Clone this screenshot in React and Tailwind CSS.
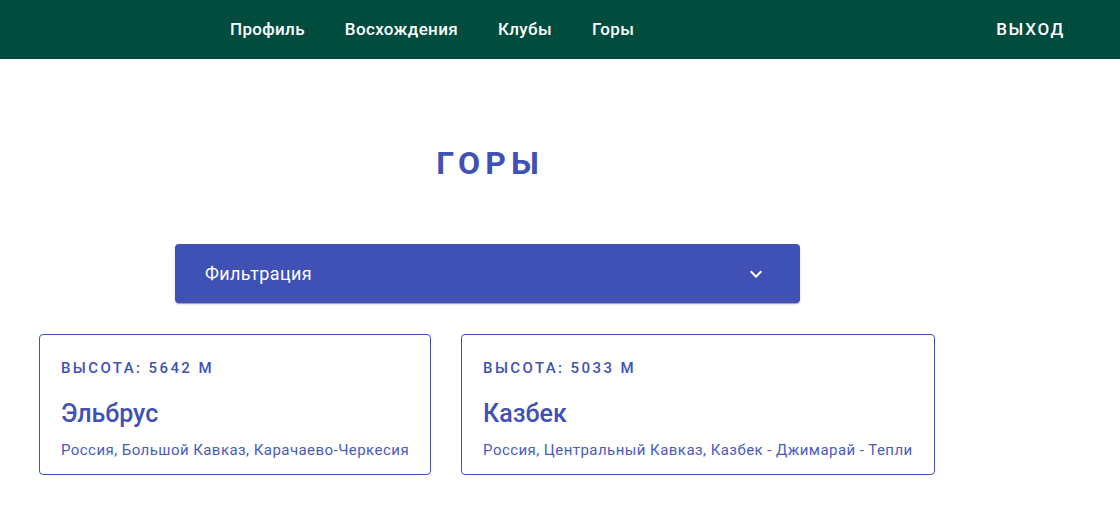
import React from 'react';

const mountains = [
  { id: 1, height: 5642, name: 'Эльбрус', region: 'Россия, Большой Кавказ, Карачаево-Черкесия' },
  { id: 2, height: 5033, name: 'Казбек', region: 'Россия, Центральный Кавказ, Казбек - Джимарай - Тепли' },
];

const navItems = ['Профиль', 'Восхождения', 'Клубы', 'Горы'];

function ExpandIcon() {
  return (
    <svg viewBox="0 0 24 24" className="h-6 w-6 fill-white">
      <path d="M16.59 8.59 12 13.17 7.41 8.59 6 10l6 6 6-6z" />
    </svg>
  );
}

export default function App() {
  return (
    <div className="min-h-[507px] bg-white font-['Roboto',sans-serif]">
      <header className="flex h-[59px] items-center bg-[#004d40] text-white">
        <nav className="ml-[230px] flex gap-10">
          {navItems.map((item) => (
            <a key={item} href="#" className="text-[17px] font-medium tracking-[0.02em]">
              {item}
            </a>
          ))}
        </nav>
        <a href="#" className="ml-auto mr-[55px] text-[17px] font-medium uppercase tracking-[0.1em]">
          Выход
        </a>
      </header>

      <main className="pt-[88px]">
        <div className="ml-[175px] w-[625px]">
          <h1 className="pl-[0.16em] text-center text-[32px] font-bold uppercase leading-none tracking-[0.16em] text-[#3f51b5]">
            Горы
          </h1>
          <button className="mt-[65px] flex h-[59px] w-full items-center justify-between rounded bg-[#3f51b5] pl-[30px] pr-[32px] text-white shadow-[0_2px_1px_-1px_rgba(0,0,0,0.2),0_1px_1px_0_rgba(0,0,0,0.14),0_1px_3px_0_rgba(0,0,0,0.12)]">
            <span className="text-[18px] tracking-[0.02em]">Фильтрация</span>
            <ExpandIcon />
          </button>
        </div>

        <div className="ml-[39px] mt-[31px] flex gap-[30px]">
          {mountains.map((m) => (
            <article
              key={m.id}
              className="h-[141px] rounded border border-[#3f51b5] px-[21px] pt-[22px] text-[#3f51b5]"
            >
              <p className="text-[15px] font-medium uppercase tracking-[0.16em]">
                Высота: {m.height} м
              </p>
              <h2 className="mt-[21px] text-[25px] font-medium leading-none">{m.name}</h2>
              <p className="mt-[13px] text-[15px] tracking-[0.03em] text-[#4a5bbd]">{m.region}</p>
            </article>
          ))}
        </div>
      </main>
    </div>
  );
}
